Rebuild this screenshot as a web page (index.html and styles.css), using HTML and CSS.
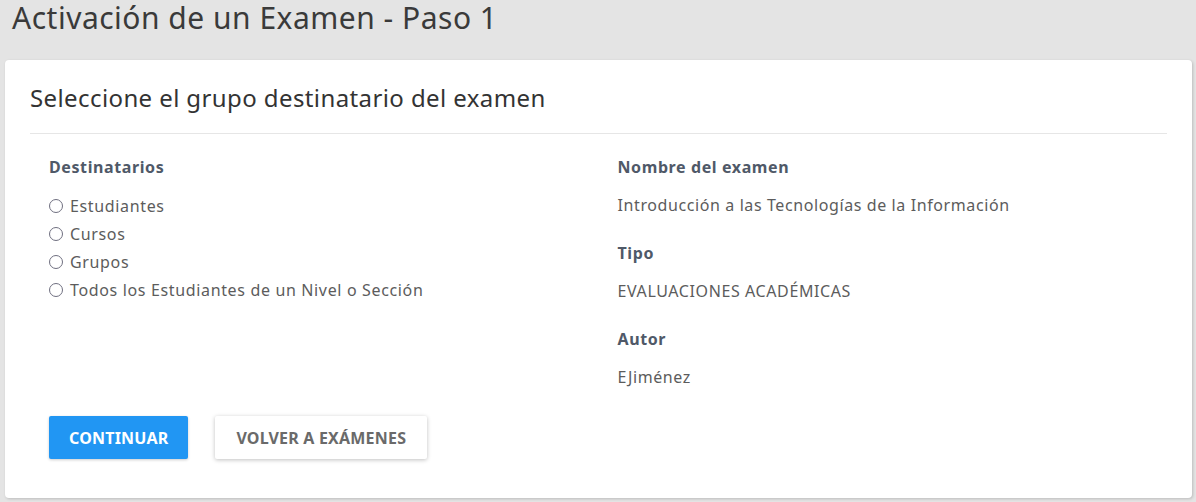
FILE: index.html
```html
<!DOCTYPE html>
<html lang="es">
<head>
<meta charset="utf-8">
<title>Activación de un Examen - Paso 1</title>
<link rel="stylesheet" href="styles.css">
</head>
<body>
<h1 class="page-title">Activación de un Examen - Paso 1</h1>
<section class="card">
  <h2 class="card-title">Seleccione el grupo destinatario del examen</h2>
  <hr class="divider">
  <div class="row">
    <div class="col">
      <div class="label">Destinatarios</div>
      <ul class="radio-list">
        <li class="radio"><span class="radio-dot"></span>Estudiantes</li>
        <li class="radio"><span class="radio-dot"></span>Cursos</li>
        <li class="radio"><span class="radio-dot"></span>Grupos</li>
        <li class="radio"><span class="radio-dot"></span>Todos los Estudiantes de un Nivel o Sección</li>
      </ul>
    </div>
    <div class="col">
      <dl class="info">
        <dt class="label">Nombre del examen</dt>
        <dd class="value">Introducción a las Tecnologías de la Información</dd>
        <dt class="label">Tipo</dt>
        <dd class="value">EVALUACIONES ACADÉMICAS</dd>
        <dt class="label">Autor</dt>
        <dd class="value">EJiménez</dd>
      </dl>
    </div>
  </div>
  <div class="actions">
    <button class="btn btn-primary">CONTINUAR</button>
    <button class="btn btn-default">VOLVER A EXÁMENES</button>
  </div>
</section>
</body>
</html>
```

FILE: styles.css
```css
* { box-sizing: border-box; }
html, body { margin: 0; padding: 0; }
body {
  background: #e4e4e4;
  font-family: "Noto Sans", "Open Sans", sans-serif;
  color: #333;
  height: 502px;
  overflow: hidden;
}
.page-title {
  margin: 0;
  padding: 0 12px;
  font-size: 30px;
  line-height: 36px;
  letter-spacing: 0.5px;
  font-weight: 400;
  color: #3a3a3a;
}
.card {
  margin: 24px 4px 0 5px;
  height: 438px;
  background: #fff;
  border-radius: 4px;
  box-shadow: 1px 1px 3px rgba(0, 0, 0, 0.18);
  padding: 22px 25px 0 25px;
}
.card-title {
  margin: 0;
  font-size: 24px;
  line-height: 32px;
  letter-spacing: 0.4px;
  font-weight: 400;
  color: #333;
}
.divider {
  margin: 19px 0 0 0;
  border: 0;
  border-top: 1px solid #e6e6e6;
  height: 0;
}
.row {
  display: grid;
  grid-template-columns: 1fr 1fr;
  margin-top: 22px;
}
.col { padding-left: 19px; }
.label {
  font-size: 16px;
  line-height: 22px;
  letter-spacing: 0.6px;
  font-weight: 700;
  color: #4f5968;
}
.radio-list {
  list-style: none;
  margin: 14px 0 0 0;
  padding: 0;
}
.radio {
  display: flex;
  align-items: center;
  font-size: 16px;
  line-height: 28px;
  letter-spacing: 0.65px;
  color: #5c5c5c;
}
.radio-dot {
  width: 14px;
  height: 14px;
  border: 1.5px solid #6f6f80;
  border-radius: 50%;
  margin: 0 7px 0 0;
  flex: none;
}
.info { margin: 0; }
.info dt { margin: 0 0 16px 0; }
.info dd {
  margin: 0 0 26px 0;
}
.info dd:last-child { margin-bottom: 0; }
.value {
  font-size: 16px;
  line-height: 22px;
  letter-spacing: 0.6px;
  color: #5c5c5c;
}
.actions {
  display: flex;
  gap: 27px;
  margin-top: 28px;
  padding-left: 19px;
}
.btn {
  height: 43px;
  border: 0;
  border-radius: 2px;
  font-family: "Noto Sans", "Open Sans", sans-serif;
  font-size: 16px;
  letter-spacing: 0.2px;
  font-weight: 700;
  padding: 0 21px;
  cursor: pointer;
}
.btn-primary {
  padding: 0 20px;
  background: #2196f3;
  color: #fff;
  box-shadow: 0 1px 3px rgba(0, 0, 0, 0.2);
}
.btn-default {
  background: #fff;
  color: #6a6a6a;
  box-shadow: 0 1px 4px rgba(0, 0, 0, 0.25);
}
```
